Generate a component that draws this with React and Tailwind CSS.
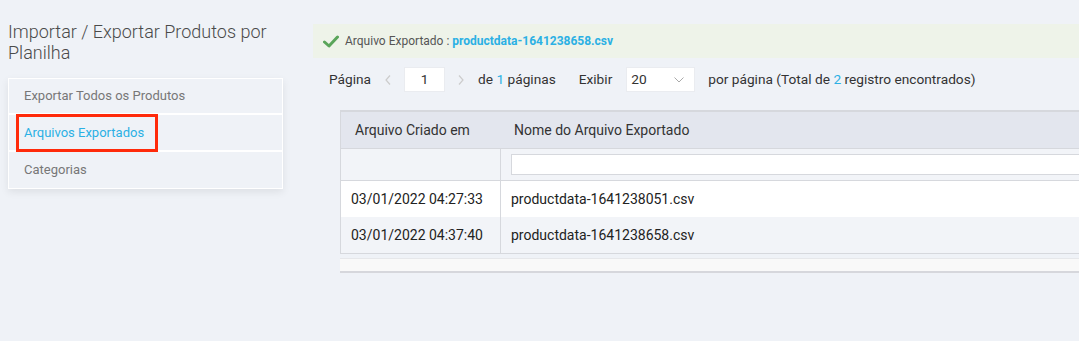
import React from "react";

function App() {
  const rows = [
    { date: "03/01/2022 04:27:33", file: "productdata-1641238051.csv" },
    { date: "03/01/2022 04:37:40", file: "productdata-1641238658.csv" },
  ];

  return (
    <div className="w-[1079px] h-[341px] overflow-hidden bg-[#eff2f7] flex font-['Roboto',sans-serif]">
      {/* sidebar */}
      <div className="w-[313px] shrink-0 pl-2 pt-[21px]">
        <h1 className="text-[18px] leading-[21px] font-light text-[#4a4a4a] w-[270px]">
          Importar / Exportar Produtos por Planilha
        </h1>
        <div className="mt-[15px] w-[275px] border border-white bg-white shadow-[0_3px_8px_rgba(0,0,0,0.08)] flex flex-col gap-[2px]">
          <div className="h-[34px] bg-[#eff2f7] pl-[15px] flex items-center text-[13px] text-[#777]">
            Exportar Todos os Produtos
          </div>
          <div className="h-[35px] bg-[#eff2f7] pl-[7px] flex items-center">
            <span className="h-[38px] w-[142px] border-[3px] border-[#ff2a0a] pl-[5px] flex items-center text-[13px] text-[#2bb0e4]">
              Arquivos Exportados
            </span>
          </div>
          <div className="h-[36px] bg-[#eff2f7] pl-[15px] flex items-center text-[13px] text-[#777]">
            Categorias
          </div>
        </div>
      </div>

      {/* main */}
      <div className="flex-1 pt-[24px] min-w-0">
        <div className="h-[34px] w-[800px] bg-[#eef3e9] flex items-center pl-[10px] text-[12px]">
          <svg width="16" height="13" viewBox="0 0 16 13" className="mr-[6px]">
            <path d="M1.5 7 L6 11 L14.5 2" fill="none" stroke="#5aa55a" strokeWidth="3" strokeLinecap="round" strokeLinejoin="round" />
          </svg>
          <span className="text-[#555]">Arquivo Exportado :&nbsp;</span>
          <span className="font-bold text-[#2bb0e4]">productdata-1641238658.csv</span>
        </div>

        <div className="flex items-center h-[25px] mt-[9px] pl-[16px] text-[13.7px] text-[#333] whitespace-nowrap">
          <span>Página</span>
          <svg width="6" height="10" viewBox="0 0 6 10" className="ml-[14px]">
            <path d="M5 0.5 L1 5 L5 9.5" fill="none" stroke="#ccc" strokeWidth="1.2" />
          </svg>
          <div className="ml-[13px] w-[41px] h-[25px] bg-white border border-[#eaecf0] flex items-center justify-center">1</div>
          <svg width="6" height="10" viewBox="0 0 6 10" className="ml-[13px]">
            <path d="M1 0.5 L5 5 L1 9.5" fill="none" stroke="#ccc" strokeWidth="1.2" />
          </svg>
          <span className="ml-[14px]">de <span className="text-[#2bb0e4]">1</span> páginas</span>
          <span className="ml-[23px]">Exibir</span>
          <div className="ml-[14px] w-[69px] h-[25px] bg-white border border-[#eaecf0] flex items-center justify-between pl-[4px] pr-[10px]">
            <span>20</span>
            <svg width="10" height="6" viewBox="0 0 10 6">
              <path d="M0.5 0.5 L5 5 L9.5 0.5" fill="none" stroke="#aaa" strokeWidth="1" />
            </svg>
          </div>
          <span className="ml-[13px]">por página (Total de <span className="text-[#2bb0e4]">2</span> registro encontrados)</span>
        </div>

        <div className="ml-[27px] mt-[18px] w-[800px]">
          <div className="border border-[#d6d8dd] border-t-2">
            <div className="flex h-[37px] bg-[#e3e6ee] border-b border-[#d6d8dd] text-[14px] text-[#333]">
              <div className="w-[160px] border-r border-[#e3e6ee] pl-[14px] flex items-center">Arquivo Criado em</div>
              <div className="flex-1 pl-[13px] flex items-center">Nome do Arquivo Exportado</div>
            </div>
            <div className="flex h-[32px] bg-[#f2f4f8] border-b border-[#d6d8dd]">
              <div className="w-[160px] border-r border-[#d6d8dd]" />
              <div className="flex-1 pl-[10px] flex items-center">
                <div className="w-full h-[21px] bg-white border border-[#d6d8dd]" />
              </div>
            </div>
            {rows.map((r, i) => (
              <div key={i} className={"flex h-[36px] text-[14px] text-[#222] " + (i % 2 ? "bg-[#f2f4f8]" : "bg-white")}>
                <div className="w-[160px] border-r border-[#d6d8dd] pl-[10px] flex items-center">{r.date}</div>
                <div className="flex-1 pl-[10px] flex items-center">{r.file}</div>
              </div>
            ))}
          </div>
          <div className="mt-[4px] h-[15px] bg-[#f9f9f9] border-t border-[#e6e7ea] border-b-2 border-b-[#d6d7dc]" />
        </div>
      </div>
    </div>
  );
}

export default App;
